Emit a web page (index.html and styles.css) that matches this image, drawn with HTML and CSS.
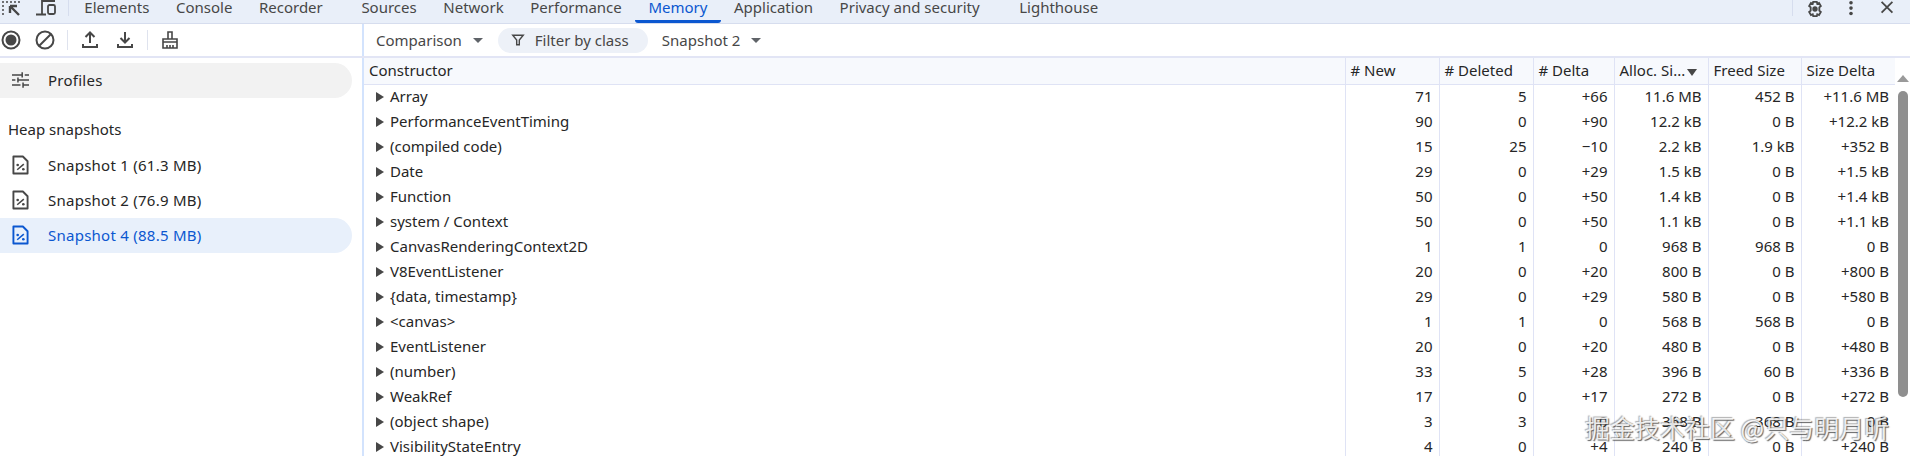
FILE: index.html
```html
<!DOCTYPE html>
<html lang="en">
<head>
    <meta charset="UTF-8">
    <title>DevTools Memory</title>
    <link rel="stylesheet" href="styles.css">
</head>
<body>
    <div class="tabbar">
        <div class="tab-icons">
            <svg class="icon inspect" viewBox="0 0 20 16"><path d="M3 2v.1M7 2v.1M11 2v.1M15 2v.1M19 2v.1M3 6v.1M3 10v.1M3 14v.1" stroke-linecap="round"/><path d="M10 6h7M10 6v7M10 6l9 9" stroke-width="2.400"/></svg>
            <svg class="icon device" viewBox="0 0 20 16"><path d="M6 14V1h13M0 14.500h10" stroke-width="1.800"/><rect x="12" y="5" width="7" height="9" rx="1.500" stroke-width="1.800"/></svg>
            <span class="tab-sep"></span>
        </div>
        <div class="tab">Elements</div>
        <div class="tab">Console</div>
        <div class="tab">Recorder</div>
        <div class="tab wide-left">Sources</div>
        <div class="tab">Network</div>
        <div class="tab">Performance</div>
        <div class="tab active">Memory</div>
        <div class="tab">Application</div>
        <div class="tab">Privacy and security</div>
        <div class="tab wider-left">Lighthouse</div>
        <div class="tab-actions">
            <span class="tab-sep"></span>
            <svg class="icon gear" viewBox="0 0 20 20"><path d="M8 2h4l.5 2.200 2-.9 2 3.400-1.700 1.500v3.600l1.700 1.500-2 3.400-2-.9L12 18H8l-.5-2.200-2 .9-2-3.400 1.700-1.500V8.200L3.500 6.700l2-3.400 2 .9z"/><circle cx="10" cy="10" r="3" class="solid"/></svg>
            <svg class="icon" viewBox="0 0 20 20"><circle cx="10" cy="3" r="2" class="solid"/><circle cx="10" cy="9" r="2" class="solid"/><circle cx="10" cy="15" r="2" class="solid"/></svg>
            <svg class="icon" viewBox="0 0 20 20"><path d="M4 2l12 12M16 2L4 14"/></svg>
        </div>
    </div>

    <div class="main">
        <div class="sidebar">
            <div class="side-toolbar">
                <svg class="icon tool-record" viewBox="0 0 20 20"><circle cx="10" cy="10" r="8.500"/><circle cx="10" cy="10" r="5.500" class="solid"/></svg>
                <svg class="icon tool-clear" viewBox="0 0 20 20"><circle cx="10" cy="10" r="8.500"/><path d="M4 16L16 4"/></svg>
                <span class="tool-sep"></span>
                <svg class="icon tool-upload" viewBox="0 0 20 20"><path d="M10 13V3M5.500 7L10 2.500 14.500 7M3 14v3h14v-3"/></svg>
                <svg class="icon tool-download" viewBox="0 0 20 20"><path d="M10 2v10M5.500 8L10 12.500 14.500 8M3 14v3h14v-3"/></svg>
                <span class="tool-sep"></span>
                <svg class="icon tool-broom" viewBox="0 0 20 20"><path d="M8 9V2h4v7M3 9h14v3H3zM3 12v6h14v-6M7 15v3M10 15v3M13 15v3" stroke-width="1.600"/></svg>
            </div>
            <div class="side-item profiles">
                <svg class="icon" viewBox="0 0 20 20"><path d="M0 4h12M15 4h5M12 1v6M0 10h4M7 10h13M7 7v6M0 16h10M13 16h7M13 13v6" stroke-width="1.800"/></svg>
                <span>Profiles</span>
            </div>
            <div class="side-heading">Heap snapshots</div>
            <div class="side-item">
                <svg class="icon file" viewBox="0 0 18 20"><path d="M1.500 1h10l5 5v13h-15z" stroke-linejoin="round"/><path d="M5.500 15l7-6" stroke-width="1.600"/><circle cx="6" cy="10" r="1.400" class="solid"/><circle cx="12" cy="14.500" r="1.400" class="solid"/></svg>
                <span>Snapshot 1 (61.3 MB)</span>
            </div>
            <div class="side-item">
                <svg class="icon file" viewBox="0 0 18 20"><path d="M1.500 1h10l5 5v13h-15z" stroke-linejoin="round"/><path d="M5.500 15l7-6" stroke-width="1.600"/><circle cx="6" cy="10" r="1.400" class="solid"/><circle cx="12" cy="14.500" r="1.400" class="solid"/></svg>
                <span>Snapshot 2 (76.9 MB)</span>
            </div>
            <div class="side-item selected">
                <svg class="icon file" viewBox="0 0 18 20"><path d="M1.500 1h10l5 5v13h-15z" stroke-linejoin="round"/><path d="M5.500 15l7-6" stroke-width="1.600"/><circle cx="6" cy="10" r="1.400" class="solid"/><circle cx="12" cy="14.500" r="1.400" class="solid"/></svg>
                <span>Snapshot 4 (88.5 MB)</span>
            </div>
        </div>

        <div class="content">
            <div class="filters">
                <div class="select compare">Comparison<span class="caret"></span></div>
                <div class="filter-box">
                    <svg class="icon" viewBox="0 0 16 16"><path d="M2 2.500h12L9.500 8v5.500h-3V8z"/></svg>
                    <span>Filter by class</span>
                </div>
                <div class="select">Snapshot 2<span class="caret"></span></div>
            </div>
            <div class="grid-wrap">
                <table class="grid">
                    <colgroup>
                        <col>
                        <col class="c-new">
                        <col class="c-del">
                        <col class="c-delta">
                        <col class="c-alloc">
                        <col class="c-freed">
                        <col class="c-size">
                    </colgroup>
                    <thead>
                        <tr>
                            <th>Constructor</th>
                            <th># New</th>
                            <th># Deleted</th>
                            <th># Delta</th>
                            <th class="sorted">Alloc. Si...<span class="sort-arrow"></span></th>
                            <th>Freed Size</th>
                            <th>Size Delta</th>
                        </tr>
                    </thead>
                    <tbody>
                        <tr><td class="name">Array</td><td>71</td><td>5</td><td>+66</td><td>11.6 MB</td><td>452 B</td><td>+11.6 MB</td></tr>
                        <tr><td class="name">PerformanceEventTiming</td><td>90</td><td>0</td><td>+90</td><td>12.2 kB</td><td>0 B</td><td>+12.2 kB</td></tr>
                        <tr><td class="name">(compiled code)</td><td>15</td><td>25</td><td>−10</td><td>2.2 kB</td><td>1.9 kB</td><td>+352 B</td></tr>
                        <tr><td class="name">Date</td><td>29</td><td>0</td><td>+29</td><td>1.5 kB</td><td>0 B</td><td>+1.5 kB</td></tr>
                        <tr><td class="name">Function</td><td>50</td><td>0</td><td>+50</td><td>1.4 kB</td><td>0 B</td><td>+1.4 kB</td></tr>
                        <tr><td class="name">system / Context</td><td>50</td><td>0</td><td>+50</td><td>1.1 kB</td><td>0 B</td><td>+1.1 kB</td></tr>
                        <tr><td class="name">CanvasRenderingContext2D</td><td>1</td><td>1</td><td>0</td><td>968 B</td><td>968 B</td><td>0 B</td></tr>
                        <tr><td class="name">V8EventListener</td><td>20</td><td>0</td><td>+20</td><td>800 B</td><td>0 B</td><td>+800 B</td></tr>
                        <tr><td class="name">{data, timestamp}</td><td>29</td><td>0</td><td>+29</td><td>580 B</td><td>0 B</td><td>+580 B</td></tr>
                        <tr><td class="name">&lt;canvas&gt;</td><td>1</td><td>1</td><td>0</td><td>568 B</td><td>568 B</td><td>0 B</td></tr>
                        <tr><td class="name">EventListener</td><td>20</td><td>0</td><td>+20</td><td>480 B</td><td>0 B</td><td>+480 B</td></tr>
                        <tr><td class="name">(number)</td><td>33</td><td>5</td><td>+28</td><td>396 B</td><td>60 B</td><td>+336 B</td></tr>
                        <tr><td class="name">WeakRef</td><td>17</td><td>0</td><td>+17</td><td>272 B</td><td>0 B</td><td>+272 B</td></tr>
                        <tr><td class="name">(object shape)</td><td>3</td><td>3</td><td>0</td><td>368 B</td><td>368 B</td><td>0 B</td></tr>
                        <tr><td class="name">VisibilityStateEntry</td><td>4</td><td>0</td><td>+4</td><td>240 B</td><td>0 B</td><td>+240 B</td></tr>
                    </tbody>
                </table>
                <div class="scrollbar">
                    <span class="scroll-up"></span>
                    <span class="scroll-thumb"></span>
                </div>
            </div>
        </div>
    </div>

    <div class="watermark">掘金技术社区 @只与明月听</div>
</body>
</html>
```

FILE: styles.css
```css
html, body {
    height: 100%;
}

body {
    margin: 0;
    font-family: "Noto Sans", "Noto Sans CJK SC", sans-serif;
    font-size: 15px;
    color: #262626;
    background-color: #fff;
    overflow: hidden;
    position: relative;
}

.icon {
    fill: none;
    stroke: #474747;
    stroke-width: 2;
    flex: none;
}

.icon .solid {
    fill: #474747;
    stroke: none;
}

/* top tabs */
.tabbar {
    display: flex;
    height: 23px;
    background-color: #e9eff9;
    border-bottom: 1px solid #d6ddee;
    color: #474747;
    line-height: 15px;
}

.tab-icons {
    display: flex;
    width: 71px;
    box-sizing: border-box;
}

.tab-icons .inspect {
    width: 20px;
    height: 16px;
}

.tab-icons .device {
    width: 20px;
    height: 16px;
    margin-left: 16px;
}

.tab-icons .tab-sep {
    margin-left: 12px;
}

.tab-sep {
    width: 1px;
    height: 16px;
    background-color: #d6ddee;
}

.tab {
    padding: 0 13.3px;
    height: 23px;
    box-sizing: border-box;
}

.tab.wide-left {
    margin-left: 12px;
}

.tab.wider-left {
    margin-left: 13px;
}

.tab.active {
    color: #0b57d0;
    border-bottom: 3px solid #0b57d0;
    border-radius: 0 0 3px 3px;
}

.tab-actions {
    margin-left: auto;
    display: flex;
    gap: 18px;
    padding-right: 14px;
}

.tab-actions .tab-sep {
    margin-right: -5px;
}

.tab-actions .icon {
    width: 18px;
    height: 18px;
}

/* below the tabs */
.main {
    display: flex;
    height: 432px;
}

.sidebar {
    width: 362px;
    flex: none;
    border-right: 2px solid #d3e3fd;
}

.side-toolbar {
    display: flex;
    align-items: center;
    height: 32px;
    border-bottom: 2px solid #e2e5f5;
    margin-right: -2px;
    padding-left: 1px;
    margin-bottom: 5px;
}

.side-toolbar .icon {
    width: 20px;
    height: 20px;
}

.tool-clear {
    margin-left: 14px;
}

.tool-sep {
    width: 1px;
    height: 20px;
    background-color: #dfe3ee;
    margin: 0 12px;
}

.tool-download {
    margin-left: 15px;
}

.side-item {
    display: flex;
    align-items: center;
    gap: 19px;
    height: 35px;
    width: 352px;
    padding: 0 0 2px 12px;
    box-sizing: border-box;
    border-radius: 0 18px 18px 0;
    letter-spacing: 0.25px;
}

.side-item .icon {
    width: 17px;
    height: 20px;
}

.profiles {
    background-color: #f2f2f2;
}

.side-heading {
    padding-left: 8px;
    height: 20px;
    line-height: 18px;
    margin: 22px 0 8px;
}

.side-item.selected {
    background-color: #e8f0fb;
    color: #0b57d0;
}

.side-item.selected .icon {
    stroke: #0b57d0;
}

.side-item.selected .solid {
    fill: #0b57d0;
}

.content {
    flex: 1;
    min-width: 0;
}

.filters {
    display: flex;
    align-items: center;
    height: 32px;
    border-bottom: 2px solid #e2e5f5;
    padding-left: 12px;
    color: #474747;
}

.select {
    display: flex;
    align-items: center;
}

.caret {
    width: 0;
    height: 0;
    margin-left: 11px;
    border-left: 5px solid transparent;
    border-right: 5px solid transparent;
    border-top: 5px solid #5f6368;
}

.filter-box {
    display: flex;
    align-items: center;
    gap: 10px;
    width: 150px;
    height: 25px;
    margin: 0 14px 0 15px;
    padding-left: 13px;
    box-sizing: border-box;
    border-radius: 13px;
    background-color: #edf1f8;
}

.filter-box .icon {
    width: 14px;
    height: 14px;
    stroke-width: 1.600;
}

/* data grid */
.grid-wrap {
    display: flex;
    height: 398px;
    overflow: hidden;
}

.grid {
    flex: 1;
    border-collapse: collapse;
    table-layout: fixed;
    align-self: flex-start;
    width: 1531px;
}

.c-new { width: 94px; }
.c-del { width: 94px; }
.c-delta { width: 81px; }
.c-alloc { width: 94px; }
.c-freed { width: 93px; }
.c-size { width: 94px; }

.grid th {
    height: 26px;
    box-sizing: border-box;
    padding: 0 5px 2px;
    font-weight: 400;
    text-align: left;
    background-color: #f7f9fd;
    border-bottom: 1px solid #dfe3f5;
    border-left: 1px solid #dfe3f5;
    white-space: nowrap;
    overflow: hidden;
}

.grid th:first-child {
    border-left: 0;
}

.sort-arrow {
    display: inline-block;
    margin-left: 2px;
    border-left: 5px solid transparent;
    border-right: 5px solid transparent;
    border-top: 7px solid #474747;
}

.grid td {
    height: 25px;
    box-sizing: border-box;
    padding: 0 6px 2px;
    text-align: right;
    border-left: 1px solid #dfe3f5;
    white-space: nowrap;
}

.grid td.name {
    border-left: 0;
    text-align: left;
    padding-left: 12px;
}

.grid td.name::before {
    content: "";
    display: inline-block;
    margin-right: 6px;
    border-top: 5px solid transparent;
    border-bottom: 5px solid transparent;
    border-left: 8px solid #474747;
}

.scrollbar {
    width: 15px;
    flex: none;
    display: flex;
    flex-direction: column;
    align-items: center;
}

.scroll-up {
    margin-top: 17px;
    border-left: 6px solid transparent;
    border-right: 6px solid transparent;
    border-bottom: 7px solid #9a9a9a;
}

.scroll-thumb {
    width: 10px;
    height: 306px;
    margin-top: 9px;
    border-radius: 5px;
    background-color: #8f8f8f;
}

.watermark {
    position: absolute;
    left: 1585px;
    top: 409px;
    font-family: "Noto Sans CJK SC", sans-serif;
    font-size: 25px;
    line-height: 36px;
    white-space: nowrap;
    color: rgba(255, 255, 255, 0.85);
    text-shadow: 1px 1px 1px rgba(60, 60, 60, 0.8), -1px -1px 1px rgba(60, 60, 60, 0.4);
}
```
